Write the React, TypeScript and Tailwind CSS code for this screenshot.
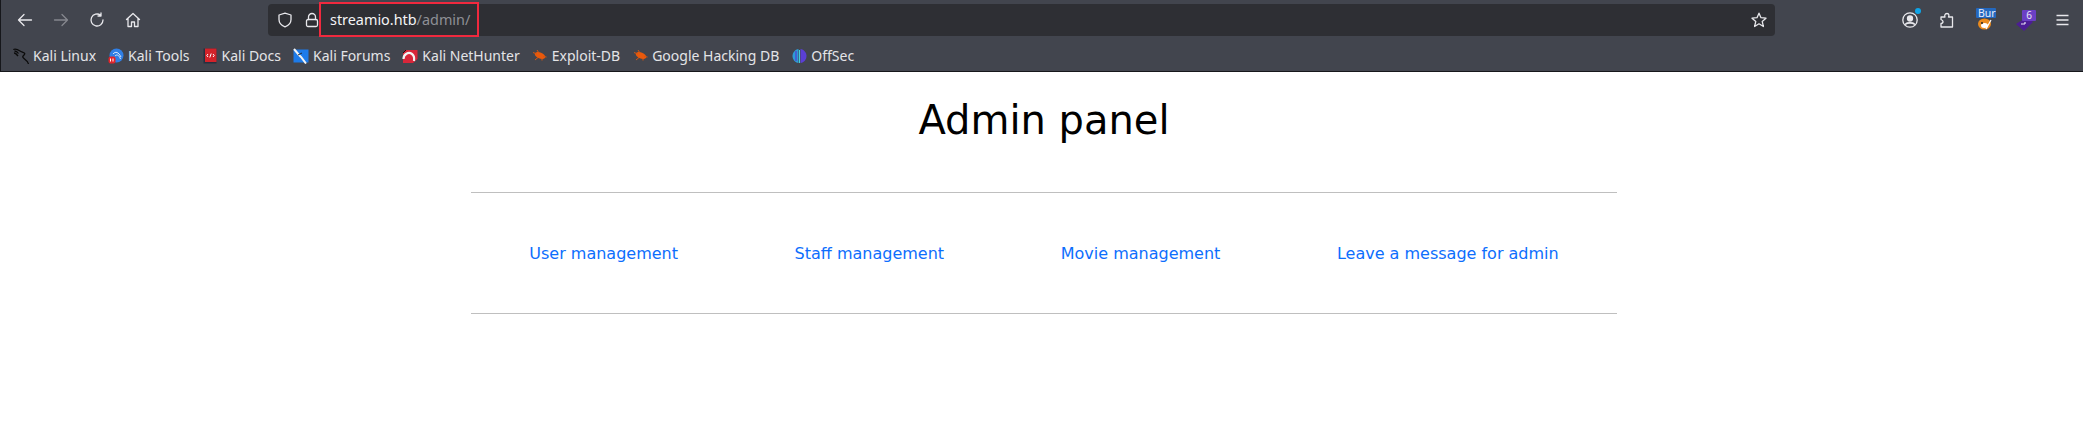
import React from "react";

const Btn = ({ children }: { children: React.ReactNode }) => (
  <div className="w-[36px] h-[32px] flex items-center justify-center shrink-0">{children}</div>
);

const stroke = { fill: "none", stroke: "#e8e8ec", strokeWidth: 1.3, strokeLinecap: "round" as const, strokeLinejoin: "round" as const };

const KaliIcon = () => (
  <svg width="16" height="16" viewBox="0 0 16 16" fill="none" stroke="#0b0b0b" strokeWidth="1.3">
    <path d="M0.3 1.5C3 0.5 5.5 2 7 3C9 4.5 13.5 4.5 11 7C9.5 8.5 9 9 11 10.5C13 12 15 14 15.5 16" />
    <path d="M1.5 3C3 3 4.5 4 5.5 5.5" />
    <path d="M1 5C2.5 4.8 3.5 6 5 8" />
  </svg>
);
const ToolsIcon = () => (
  <svg width="16" height="16" viewBox="0 0 16 16">
    <circle cx="8.5" cy="7.5" r="7" fill="#2f7fe6" />
    <path d="M5 6C7.5 3 10.5 4 13 9M7 8C9 6 11 7 12.5 11" fill="none" stroke="#d8e8fb" strokeWidth="1" />
    <rect x="0.5" y="8.5" width="7" height="7" rx="2" fill="#e0252b" />
    <path d="M2.5 10.5V13.5M5 10.5V13.5" stroke="#fff" strokeWidth="1" />
  </svg>
);
const DocsIcon = () => (
  <svg width="14" height="16" viewBox="0 0 14 16">
    <rect x="0.5" y="0.5" width="13" height="15" fill="#27303f" />
    <rect x="2" y="0.5" width="11.5" height="13.5" fill="#d2232a" />
    <path d="M5 6L3.8 7.5L5 9M10 6L11.2 7.5L10 9M8.2 5.5L6.8 9.5" fill="none" stroke="#fff" strokeWidth="1" />
  </svg>
);
const ForumsIcon = () => (
  <svg width="16" height="16" viewBox="0 0 16 16">
    <rect x="0.5" y="1.5" width="15" height="13" fill="#1d7bea" />
    <path d="M1 1L6 7L8 9L13 15.5" fill="none" stroke="#f2f2f2" strokeWidth="2" />
    <path d="M5 7L9 5" fill="none" stroke="#1f2937" strokeWidth="1" />
  </svg>
);
const HunterIcon = () => (
  <svg width="16" height="16" viewBox="0 0 16 16">
    <path d="M3 2H15.5V11L11 15H1V5Z" fill="#d8263a" />
    <path d="M1.5 11C1.5 6 6.5 3.5 10 6C12 7.5 12.5 10 12 13" fill="none" stroke="#f3f3f3" strokeWidth="2.2" />
    <path d="M1 5L4 2" fill="none" stroke="#111" strokeWidth="1" />
  </svg>
);
const BugIcon = () => (
  <svg width="15" height="13" viewBox="0 0 15 13">
    <ellipse cx="8" cy="6.5" rx="5.5" ry="3" transform="rotate(22 8 6.5)" fill="#e8590c" />
    <path d="M1 3.5L5 5M3 11L6 8.5M5 1L7 4M10 11.5L10 9M14.5 8L11 7.5" stroke="#d9560f" strokeWidth="1" />
  </svg>
);
const OffSecIcon = () => (
  <svg width="15" height="16" viewBox="0 0 15 16">
    <path d="M6.5 1C3 1.5 0.5 4.5 0.5 8C0.5 11.5 3 14.5 6.5 15Z" fill="#2e9bd6" />
    <path d="M8.5 1C12 1.5 14.5 4.5 14.5 8C14.5 11.5 12 14.5 8.5 15Z" fill="#5b3fd6" />
    <path d="M4 3V13" stroke="#4a4fd0" strokeWidth="1.5" />
    <path d="M7.5 2V15" stroke="#42d0d8" strokeWidth="1" />
  </svg>
);

const marks: [React.ReactNode, string][] = [
  [<KaliIcon />, "Kali Linux"],
  [<ToolsIcon />, "Kali Tools"],
  [<DocsIcon />, "Kali Docs"],
  [<ForumsIcon />, "Kali Forums"],
  [<HunterIcon />, "Kali NetHunter"],
  [<BugIcon />, "Exploit-DB"],
  [<BugIcon />, "Google Hacking DB"],
  [<OffSecIcon />, "OffSec"],
];

const links = ["User management", "Staff management", "Movie management", "Leave a message for admin"];

export default function App() {
  return (
    <div className="w-[2083px] h-[422px] overflow-hidden bg-white flex flex-col">
      <header className="h-[72px] shrink-0 bg-[#42454e] border-b border-b-[#16171b] border-l border-l-[#16171b] flex flex-col font-['Noto_Sans',sans-serif]">
        <div className="h-[40px] shrink-0 flex items-center pl-[6px]">
          <Btn>
            <svg width="16" height="16" viewBox="0 0 16 16" {...stroke}><path d="M14.5 8H1.5M7 2.5L1.5 8L7 13.5" /></svg>
          </Btn>
          <Btn>
            <svg width="16" height="16" viewBox="0 0 16 16" {...stroke} stroke="#85878e"><path d="M1.5 8H14.5M9 2.5L14.5 8L9 13.5" /></svg>
          </Btn>
          <Btn>
            <svg width="16" height="16" viewBox="0 0 16 16" {...stroke}><path d="M14 8A6 6 0 1 1 11.6 3.2M12 1V4H9" /></svg>
          </Btn>
          <Btn>
            <svg width="16" height="16" viewBox="0 0 16 16" {...stroke}><path d="M1.5 7.5L8 1.5L14.5 7.5M3 6.5V14.5H6.5V10H9.5V14.5H13V6.5" /></svg>
          </Btn>
          <div className="ml-[117px] w-[1507px] h-[32px] rounded-[4px] bg-[#2e2f34] flex items-center pl-[9px] pr-[8px] relative">
            <svg width="16" height="16" viewBox="0 0 16 16" {...stroke}><path d="M8 1.2L14 3V7.5C14 11 11.5 13.5 8 14.8C4.5 13.5 2 11 2 7.5V3Z" /></svg>
            <svg className="ml-[12px]" width="14" height="16" viewBox="0 0 14 16" {...stroke}><rect x="1.5" y="7.5" width="11" height="7" rx="1.5" /><path d="M3.5 7.5V5A3.5 3.5 0 0 1 10.5 5V7.5" /></svg>
            <div className="ml-[11px] text-[14.4px] leading-[20px] text-[#f4f4f6] whitespace-nowrap">
              streamio.htb<span className="text-[#8f9096]">/admin/</span>
            </div>
            <div className="absolute left-[51px] top-[-2px] w-[160px] h-[35px] border-[2.5px] border-[#f0293e]" />
            <svg className="ml-auto" width="16" height="16" viewBox="0 0 16 16" {...stroke}><path d="M8 1.2L10 5.7L15 6.2L11.2 9.4L12.4 14.5L8 11.8L3.6 14.5L4.8 9.4L1 6.2L6 5.7Z" /></svg>
          </div>
          <div className="flex items-center ml-[127px]">
            <div className="relative w-[16px] h-[16px] mr-[21px]">
              <svg width="16" height="16" viewBox="0 0 16 16" {...stroke}><circle cx="8" cy="8" r="7.2" /><circle cx="8" cy="6.5" r="2.5" fill="#e8e8ec" /><path d="M3.8 12C5 10.5 11 10.5 12.2 12" strokeWidth="1.8" /></svg>
              <div className="absolute top-[-4px] right-[-3px] w-[6px] h-[6px] rounded-full bg-[#0ea5e9]" />
            </div>
            <svg className="mr-[21px]" width="16" height="16" viewBox="0 0 16 16" {...stroke}><path d="M2 15V11.5C3.5 11.5 4 10.5 4 9.5C4 8.5 3 8 2 7.5V5H6C5.5 4 5.5 1.5 8 1.5C10.5 1.5 10 4 9.5 5H13.5V15Z" /></svg>
            <div className="relative w-[20px] h-[22px] mr-[20px]">
              <div className="absolute top-[-1px] left-0 w-[20px] h-[10px] bg-[#2468be] rounded-[1px] overflow-hidden text-[10.5px] leading-[10px] text-[#e8eefc] whitespace-nowrap pl-[2px]">Burp</div>
              <svg className="absolute top-[9px] left-[1px]" width="15" height="12" viewBox="0 0 15 12">
                <ellipse cx="7.5" cy="6" rx="6.5" ry="5.5" fill="#ea8a1c" />
                <ellipse cx="7.5" cy="7.5" rx="3.5" ry="2.5" fill="#fff" />
                <path d="M9 11L14 2" stroke="#fff" strokeWidth="1.2" />
                <circle cx="5" cy="5" r="1" fill="#222" />
              </svg>
            </div>
            <div className="relative w-[20px] h-[21px] mr-[20px]">
              <svg className="absolute left-0 top-[7px]" width="17" height="14" viewBox="0 0 17 14">
                <path d="M0 7L11 0L17 5L8 14Z" fill="#4c1d95" />
                <path d="M5 7H9M9 5V7" stroke="#e9e5f5" strokeWidth="1.2" />
              </svg>
              <div className="absolute top-0 right-0 w-[14px] h-[11px] bg-[#6b3fc4] rounded-[1px] text-[10px] leading-[11px] text-center text-[#e8e4f5]">6</div>
            </div>
            <svg width="13" height="12" viewBox="0 0 13 12" stroke="#e8e8ec" strokeWidth="1.3"><path d="M0.5 1.5H12.5M0.5 6H12.5M0.5 10.5H12.5" /></svg>
          </div>
        </div>
        <nav className="h-[31px] flex items-center pl-[12px] gap-[12px] text-[14px] text-[#e4e4e7]">
          {marks.map(([icon, label]) => (
            <div key={label} className="flex items-center gap-[4px] whitespace-nowrap">
              <span className="flex justify-center shrink-0 w-[16px]">{icon}</span>
              <span>{label}</span>
            </div>
          ))}
        </nav>
      </header>
      <main className="w-[1146px] ml-[471px] font-['DejaVu_Sans',sans-serif]">
        <h1 className="mt-[24px] text-[40px] leading-[48px] text-center text-black">Admin panel</h1>
        <hr className="mt-[48px] border-t border-[#bfbfbf]" />
        <div className="h-[120px] pt-[1px] flex items-center justify-around text-[16px] text-[#0d6efd]">
          {links.map((l) => <a key={l} href="#">{l}</a>)}
        </div>
        <hr className="border-t border-[#bfbfbf]" />
      </main>
    </div>
  );
}
